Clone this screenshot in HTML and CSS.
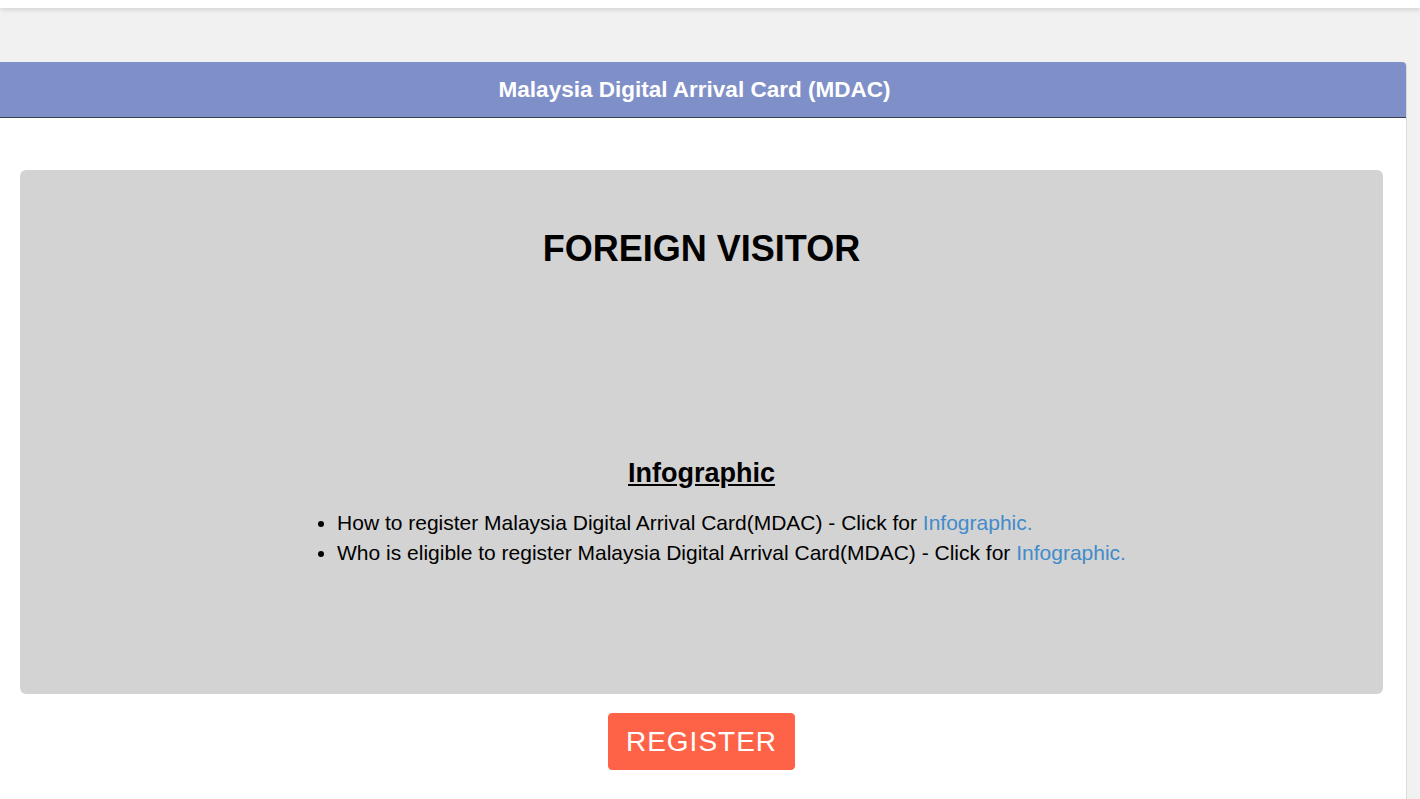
FILE: index.html
```html
<!DOCTYPE html>
<html>
<head>
	<title>Malaysia Digital Arrival Card (MDAC)</title>
	<meta charset="UTF-8">
	<meta name="viewport" content="width=device-width, initial-scale=1.0">
	<link rel="stylesheet" href="styles.css">
</head>
<body>
	<div class="topbar"></div>
	<main class="page">
		<section class="panel">
			<header class="panel-heading">
				<h2>Malaysia Digital Arrival Card (MDAC)</h2>
			</header>
			<div class="panel-body">
				<div class="visitor-box">
					<h1>FOREIGN VISITOR</h1>
					<div class="infographic">
						<h3>Infographic</h3>
						<ul>
							<li>How to register Malaysia Digital Arrival Card(MDAC) - Click for <a href="#">Infographic.</a></li>
							<li>Who is eligible to register Malaysia Digital Arrival Card(MDAC) - Click for <a href="#">Infographic.</a></li>
						</ul>
					</div>
				</div>
				<div class="actions">
					<a href="#" class="btn-register">REGISTER</a>
				</div>
			</div>
		</section>
	</main>
</body>
</html>
```

FILE: styles.css
```css
body {
	margin: 0;
	padding: 0;
	background-color: #f1f1f1;
	font-family: "Liberation Sans", Arial, sans-serif;
	color: #000;
}
.topbar {
	height: 8px;
	background-color: #fff;
	box-shadow: 0 2px 5px rgba(0, 0, 0, 0.12);
}
.page {
	padding: 54px 13px 0 0;
}
.panel {
	box-sizing: border-box;
	background-color: #fff;
	border-right: 1px solid #dcdcdc;
	border-top-right-radius: 4px;
	min-height: 737px;
}
.panel-heading {
	background-color: #7f90c9;
	border-bottom: 1px solid #3a3f51;
	border-top-right-radius: 4px;
	height: 55px;
	display: flex;
	align-items: center;
	justify-content: center;
	padding-right: 17px;
}
.panel-heading h2 {
	margin: 0;
	color: #fff;
	font-size: 22.5px;
	font-weight: bold;
}
.panel-body {
	padding: 52px 23px 0 20px;
}
.visitor-box {
	background-color: #d3d3d3;
	border-radius: 6px;
	text-align: center;
	padding: 0 20px 126px;
}
.visitor-box h1 {
	margin: 0;
	padding-top: 59px;
	font-size: 36px;
	line-height: 40px;
	font-weight: bold;
}
.infographic {
	margin-top: 189px;
	display: flex;
	flex-direction: column;
	align-items: center;
}
.infographic h3 {
	margin: 0 0 20px;
	font-size: 27px;
	line-height: 30px;
	font-weight: bold;
	text-decoration: underline;
}
.infographic ul {
	margin: 0 0 0 20px;
	padding-left: 40px;
	text-align: left;
	font-size: 21px;
	line-height: 30px;
}
.infographic a {
	color: #428bca;
	text-decoration: none;
}
.actions {
	display: flex;
	justify-content: center;
	padding-top: 19px;
}
.btn-register {
	display: inline-block;
	background-color: #ff6347;
	border: 1px solid #ff6347;
	border-radius: 4px;
	color: #fff;
	font-size: 28px;
	line-height: 31px;
	letter-spacing: 1px;
	padding: 12px 17px;
	text-decoration: none;
}
```
